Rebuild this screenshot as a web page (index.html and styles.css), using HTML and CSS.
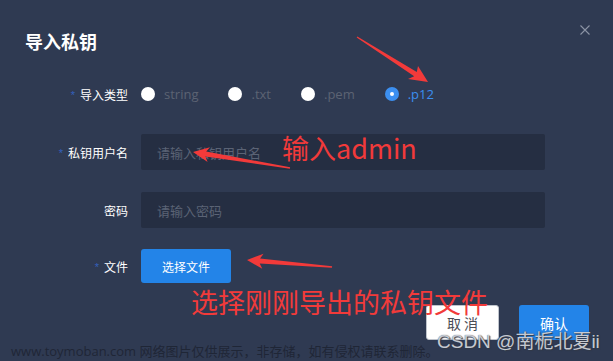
FILE: index.html
```html
<!DOCTYPE html>
<html lang="zh">
<head>
<meta charset="utf-8">
<title>导入私钥</title>
<link rel="stylesheet" href="styles.css">
</head>
<body>
<div class="dialog">
  <div class="header">
    <div class="title">导入私钥</div>
    <button class="close" aria-label="关闭">
      <svg width="10" height="10" viewBox="0 0 10 10"><path d="M0.5 0.5 L9.5 9.5 M9.5 0.5 L0.5 9.5" stroke="#8c94a5" stroke-width="1.1" fill="none"/></svg>
    </button>
  </div>
  <div class="form">
    <div class="row">
      <div class="label"><span class="req">*</span>导入类型</div>
      <div class="radios">
        <span class="radio"><i class="dot"></i><span class="rtext">string</span></span>
        <span class="radio"><i class="dot"></i><span class="rtext">.txt</span></span>
        <span class="radio"><i class="dot"></i><span class="rtext">.pem</span></span>
        <span class="radio checked"><i class="dot"></i><span class="rtext">.p12</span></span>
      </div>
    </div>
    <div class="row">
      <div class="label"><span class="req">*</span>私钥用户名</div>
      <div class="input"><span class="ph">请输入私钥用户名</span></div>
    </div>
    <div class="row">
      <div class="label">密码</div>
      <div class="input"><span class="ph">请输入密码</span></div>
    </div>
    <div class="row">
      <div class="label"><span class="req">*</span>文件</div>
      <button class="btn primary file">选择文件</button>
    </div>
  </div>
  <div class="footer">
    <button class="btn plain">取 消</button>
    <button class="btn primary ok">确认</button>
  </div>

  <svg class="annot" width="613" height="361" viewBox="0 0 613 361">
    <polygon fill="#f23a3a" points="357.3,36.6 416.8,72.0 418,66 428,82 408,79 414.2,76.2 356.7,37.4"/>
    <polygon fill="#f23a3a" points="290.1,167.3 206.2,151.6 210,147.2 193,152 207.6,162 205.4,156.6 289.9,168.7"/>
    <polygon fill="#f23a3a" points="332.1,266.3 260.1,258.6 263.5,253.8 247,260 262.3,268.8 259.7,263.6 331.9,267.7"/>
  </svg>
  <div class="note note1">输入admin</div>
  <div class="note note2">选择刚刚导出的私钥文件</div>
  <div class="wm wm1">www.toymoban.com 网络图片仅供展示，非存储，如有侵权请联系删除。</div>
  <div class="wm wm2">CSDN @南栀北夏ii</div>
</div>
</body>
</html>
```

FILE: styles.css
```css
html, body {
  margin: 0;
  padding: 0;
  background: #2f3a52;
}

.dialog {
  position: relative;
  width: 613px;
  height: 361px;
  overflow: hidden;
  background: #2f3a52;
  font-family: "Open Sans", "Noto Sans CJK SC", sans-serif;
  color: #fff;
}

.header {
  display: flex;
  justify-content: space-between;
  align-items: flex-start;
  padding: 25px 23px 0 25px;
}

.title {
  margin-top: 4px;
  font-family: "Noto Sans CJK SC", sans-serif;
  font-size: 18px;
  font-weight: 700;
  line-height: 24px;
  color: #fff;
}

.close {
  width: 10px;
  height: 10px;
  padding: 0;
  border: 0;
  background: none;
  display: flex;
}

.form {
  display: flex;
  flex-direction: column;
  gap: 22px;
  margin-top: 23px;
  padding-left: 25px;
}

.row {
  display: flex;
  align-items: center;
  height: 36px;
}

.row:last-child {
  margin-top: -2px;
}

.label {
  width: 103px;
  margin-right: 13px;
  text-align: right;
  font-family: "Noto Sans CJK SC", sans-serif;
  font-size: 12px;
  color: #fff;
}

.req {
  color: #3460bd;
  font-family: "Liberation Sans", sans-serif;
  font-size: 11px;
  margin-right: 5px;
  position: relative;
  top: -1px;
}

.radios {
  display: flex;
  align-items: center;
}

.radio {
  display: flex;
  align-items: center;
  margin-right: 30px;
  font-size: 13px;
  color: #5c6373;
}

.dot {
  width: 14px;
  height: 14px;
  border-radius: 50%;
  background: #fff;
  margin-right: 9px;
  display: flex;
  align-items: center;
  justify-content: center;
}

.radio.checked .dot {
  background: #3c8ff0;
}

.radio.checked .dot::after {
  content: "";
  width: 4px;
  height: 4px;
  border-radius: 50%;
  background: #fff;
}

.radio.checked {
  color: #3b8ff0;
}

.input {
  width: 404px;
  height: 36px;
  box-sizing: border-box;
  padding-left: 16px;
  display: flex;
  align-items: center;
  background: #252e42;
  border-radius: 2px;
}

.ph {
  font-family: "Noto Sans CJK SC", sans-serif;
  font-size: 13px;
  color: #5b6375;
}

.btn {
  border: 0;
  padding: 0;
  font-family: "Noto Sans CJK SC", sans-serif;
  border-radius: 3px;
  display: flex;
  align-items: center;
  justify-content: center;
}

.primary {
  background: #2384e8;
  color: #fff;
}

.file {
  width: 90px;
  height: 34px;
  font-size: 12px;
}

.footer {
  display: flex;
  justify-content: flex-end;
  gap: 20px;
  margin-top: 21px;
  padding-right: 24px;
}

.plain {
  width: 73px;
  height: 35px;
  box-sizing: border-box;
  background: #fff;
  border: 1px solid #bfc4cc;
  color: #4a4d55;
  font-size: 14px;
  white-space: pre;
}

.ok {
  width: 70px;
  height: 35px;
  font-size: 14px;
}

.annot {
  position: absolute;
  left: 0;
  top: 0;
  pointer-events: none;
}

.note {
  position: absolute;
  font-family: "Noto Sans CJK SC", sans-serif;
  font-size: 27px;
  line-height: 27px;
  color: #f23a3a;
  white-space: nowrap;
}

.note1 {
  left: 282px;
  top: 134px;
}

.note2 {
  left: 191px;
  top: 288px;
}

.wm {
  position: absolute;
  white-space: nowrap;
}

.wm1 {
  left: 11px;
  top: 343px;
  font-family: "Open Sans", "Noto Sans CJK SC", sans-serif;
  font-size: 13px;
  line-height: 16px;
  color: #1f2636;
}

.wm2 {
  left: 437px;
  top: 330px;
  font-family: "Liberation Sans", "Noto Sans CJK SC", sans-serif;
  font-size: 19px;
  line-height: 24px;
  color: rgba(225, 228, 234, 0.85);
  text-shadow: 0 0 1px #333a48, 1px 1px 1px #333a48;
}
```
